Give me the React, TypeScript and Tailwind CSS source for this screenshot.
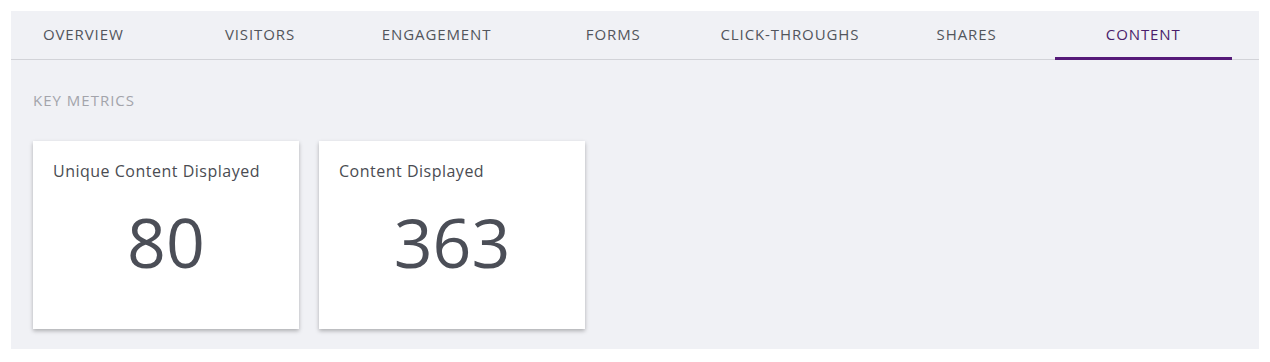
import React from "react";

const tabs = ["OVERVIEW", "VISITORS", "ENGAGEMENT", "FORMS", "CLICK-THROUGHS", "SHARES", "CONTENT"];

function Card({ title, value }: { title: string; value: string }) {
  return (
    <div className="w-[266px] h-[188px] bg-white shadow-[0_2px_4px_rgba(0,0,0,0.28)] flex flex-col px-5 pt-[19px]">
      <div className="text-[16px] leading-[22px] tracking-[0.5px] text-[#4a4c52]">{title}</div>
      <div className="flex-1 flex justify-center pt-[20px]">
        <span className="text-[68px] leading-[80px] text-[#4b4e57]">{value}</span>
      </div>
    </div>
  );
}

export default function App() {
  return (
    <div className="w-[1270px] h-[362px] bg-white p-[11px]" style={{ fontFamily: '"Open Sans", "Noto Sans", sans-serif' }}>
      <div className="w-[1248px] h-[338px] bg-[#f0f1f5] overflow-hidden flex flex-col">
        <div className="h-[49px] border-b border-[#d2d3d8] flex -ml-4 shrink-0">
          {tabs.map((t) => {
            const active = t === "CONTENT";
            return (
              <div
                key={t}
                className={`relative w-[176.67px] shrink-0 flex items-center justify-center text-[15px] tracking-[0.9px] ${active ? "text-[#4a1d6b]" : "text-[#52555c]"}`}
              >
                <span className="-mt-[1px]">{t}</span>
                {active && <div className="absolute left-0 right-0 bottom-[-1px] h-[3px] bg-[#551a78]" />}
              </div>
            );
          })}
        </div>
        <div className="px-[22px] pt-[31px]">
          <div className="text-[15px] leading-[18px] tracking-[1px] text-[#a3a4ab]">KEY METRICS</div>
          <div className="flex gap-[20px] mt-[32px]">
            <Card title="Unique Content Displayed" value="80" />
            <Card title="Content Displayed" value="363" />
          </div>
        </div>
      </div>
    </div>
  );
}
